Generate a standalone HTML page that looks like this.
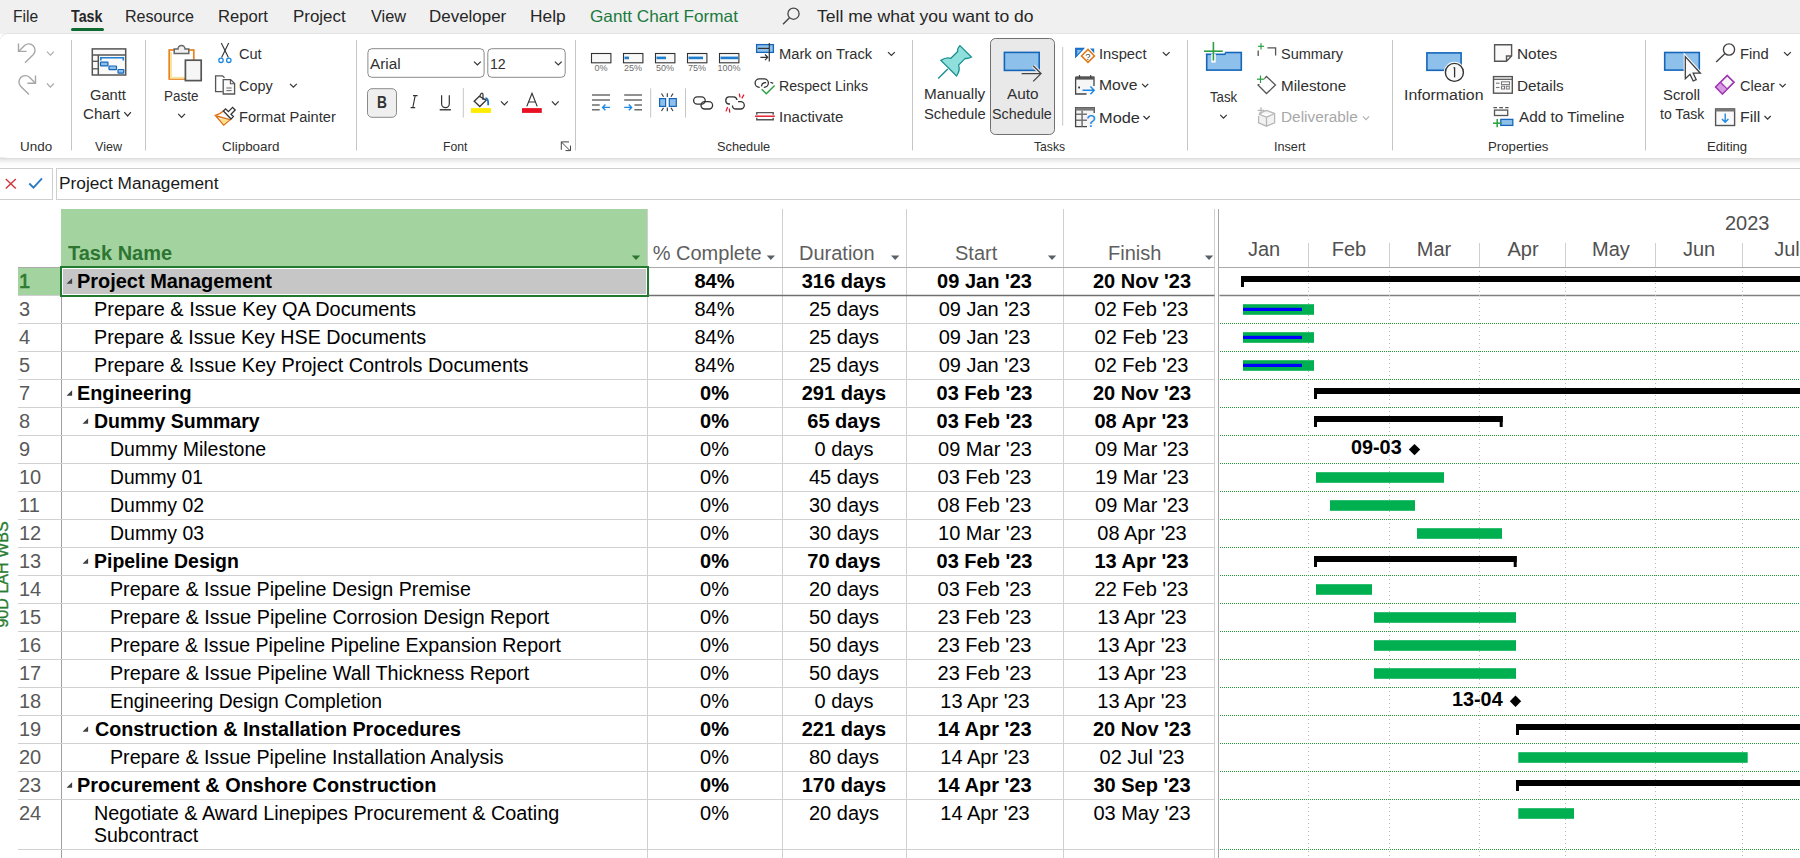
<!DOCTYPE html>
<html><head><meta charset="utf-8"><style>
html,body{margin:0;padding:0;}
body{width:1800px;height:858px;position:relative;overflow:hidden;background:#fff;font-family:"Liberation Sans", sans-serif;}
.t{position:absolute;white-space:pre;transform-origin:0 0;}
#menubar{position:absolute;left:0;top:0;width:1800px;height:34px;background:#f0f0f0;}
#ribbon{position:absolute;left:0;top:34px;width:1800px;height:124px;background:#fff;border-top-left-radius:8px;border-bottom-left-radius:8px;box-shadow:0 -1px 0 #e4e4e4;}
#gap{position:absolute;left:0;top:157px;width:1800px;height:11px;background:linear-gradient(#ffffff 0px,#d8d8d8 1px,#e4e4e4 2px,#f0f0f0 4px,#f9f9f9 6px,#fdfdfd 8px,#ffffff 11px);}
#fb1{position:absolute;left:-1px;top:168px;width:52px;height:30px;border:1px solid #cfcfcf;background:#fff;}
#fb2{position:absolute;left:56px;top:168px;width:1760px;height:30px;border:1px solid #cfcfcf;background:#fff;}
#tabline{position:absolute;left:71px;top:28px;width:33px;height:3px;background:#0e6b2f;border-radius:1.5px;}
svg{position:absolute;left:0;top:0;}
</style></head><body>
<div id="menubar"></div><div id="tabline"></div>
<div id="gap"></div>
<div id="ribbon"></div>
<div id="fb1"></div><div id="fb2"></div>
<svg width="1800" height="858" viewBox="0 0 1800 858" shape-rendering="auto">
<line x1="71.5" y1="40" x2="71.5" y2="150.5" stroke="#c6c6c6" stroke-width="1" />
<line x1="145.5" y1="40" x2="145.5" y2="150.5" stroke="#c6c6c6" stroke-width="1" />
<line x1="356.5" y1="40" x2="356.5" y2="150.5" stroke="#c6c6c6" stroke-width="1" />
<line x1="575.5" y1="40" x2="575.5" y2="150.5" stroke="#c6c6c6" stroke-width="1" />
<line x1="912.5" y1="40" x2="912.5" y2="150.5" stroke="#c6c6c6" stroke-width="1" />
<line x1="1187.5" y1="40" x2="1187.5" y2="150.5" stroke="#c6c6c6" stroke-width="1" />
<line x1="1392.5" y1="40" x2="1392.5" y2="150.5" stroke="#c6c6c6" stroke-width="1" />
<line x1="1645.5" y1="40" x2="1645.5" y2="150.5" stroke="#c6c6c6" stroke-width="1" />
<path d="M18.5,43.5 V51.4 H26.6" stroke="#a6a6a6" fill="none" stroke-width="1.4" />
<path d="M18.8,51.2 L24.5,45.5 A6.3,6.3 0 0 1 33.4,54.4 L25,62.8" stroke="#a6a6a6" fill="none" stroke-width="1.4" />
<path d="M47.0,51.7 L50.4,55.3 L53.8,51.7" stroke="#a6a6a6" fill="none" stroke-width="1.1" />
<path d="M35.5,75.5 V83.2 H27.4" stroke="#a6a6a6" fill="none" stroke-width="1.4" />
<path d="M35.2,83 L29.5,77.3 A6.3,6.3 0 0 0 20.6,86.2 L29,94.6" stroke="#a6a6a6" fill="none" stroke-width="1.4" />
<path d="M47.0,83.5 L50.4,87.1 L53.8,83.5" stroke="#a6a6a6" fill="none" stroke-width="1.1" />
<rect x="92.3" y="48.9" width="33.4" height="26.1" fill="#fafafa" stroke="#555" stroke-width="1.5" rx="0" />
<line x1="92.3" y1="55" x2="125.7" y2="55" stroke="#555" stroke-width="1.5" />
<line x1="98.3" y1="55" x2="98.3" y2="75" stroke="#555" stroke-width="1.5" />
<line x1="92.3" y1="61.3" x2="98.3" y2="61.3" stroke="#555" stroke-width="1.3" />
<line x1="92.3" y1="68.8" x2="98.3" y2="68.8" stroke="#555" stroke-width="1.3" />
<path d="M100.8,60.6 V57.8 H123.3 V60.6" stroke="#1f7fd0" fill="none" stroke-width="1.6" />
<rect x="100.5" y="62.2" width="7.5" height="3.6" fill="#8ec0ec" stroke="#1565b8" stroke-width="1.2" rx="0.6" />
<rect x="109" y="66" width="7.5" height="3.6" fill="#8ec0ec" stroke="#1565b8" stroke-width="1.2" rx="0.6" />
<rect x="118" y="69.5" width="5.799999999999997" height="3.6" fill="#8ec0ec" stroke="#1565b8" stroke-width="1.2" rx="0.6" />
<rect x="169.2" y="50" width="24.6" height="29" fill="#fff" stroke="#e8821e" stroke-width="1.7" rx="0" />
<path d="M171,52 V77.8 H184" stroke="#fbe3a0" fill="none" stroke-width="2" />
<rect x="185.4" y="60.2" width="15.8" height="20.4" fill="#f6f6f6" stroke="#555" stroke-width="1.7" rx="0" />
<path d="M174.2,53.6 V49 H178 A3.5,3.5 0 0 1 185,49 H188.8 V53.6 Z" stroke="#666" fill="#f0f0f0" stroke-width="1.5" />
<path d="M178.2,113.89999999999999 L181.6,117.3 L185.0,113.89999999999999" stroke="#333" fill="none" stroke-width="1.2" />
<line x1="221.3" y1="43.1" x2="228.4" y2="57.5" stroke="#333" stroke-width="1.1" />
<line x1="228.7" y1="43.1" x2="221.6" y2="57.5" stroke="#333" stroke-width="1.1" />
<circle cx="221" cy="60.3" r="2.2" fill="#fff" stroke="#1e88e5" stroke-width="1.3"/>
<circle cx="228.8" cy="60.3" r="2.2" fill="#fff" stroke="#1e88e5" stroke-width="1.3"/>
<path d="M222.6,91.6 H215.6 V75.8 H222.5 L224.5,77.8" stroke="#555" fill="none" stroke-width="1.3" />
<path d="M223.2,94 V79.6 H230.6 L234.6,83.6 V94 Z" stroke="#555" fill="#fafafa" stroke-width="1.3" />
<path d="M230.4,79.6 V83.8 H234.6" stroke="#555" fill="none" stroke-width="1.1" />
<line x1="226.4" y1="88" x2="231.6" y2="88" stroke="#666" stroke-width="1" />
<line x1="226.4" y1="90.6" x2="231.6" y2="90.6" stroke="#666" stroke-width="1" />
<path d="M290.0,83.8 L293.4,87.2 L296.79999999999995,83.8" stroke="#333" fill="none" stroke-width="1.2" />
<path d="M223.4,111 Q219.5,114.5 215.4,115.5 L223.7,125 L231,119" stroke="#e07010" fill="#fdfdfd" stroke-width="1.4" />
<path d="M219.8,118.4 L229.2,120 L223.7,124.2 Z" stroke="none" fill="#fbe08a" stroke-width="1" />
<line x1="216.5" y1="116" x2="229.8" y2="119.6" stroke="#e07010" stroke-width="1.3" />
<path d="M223.4,111 L225.6,108.8 L228.4,111.6 L232.6,107.4 L235.2,110 L231,114.2 L233.4,116.6 L231,119 Z" stroke="#333" fill="#fff" stroke-width="1.3" />
<rect x="367.9" y="48.7" width="116.2" height="28.6" fill="#fff" stroke="#8a8a8a" stroke-width="1" rx="4" />
<rect x="487.8" y="48.7" width="77.4" height="28.6" fill="#fff" stroke="#8a8a8a" stroke-width="1" rx="4" />
<path d="M474.0,61.599999999999994 L477.4,65.0 L480.79999999999995,61.599999999999994" stroke="#333" fill="none" stroke-width="1.2" />
<path d="M554.9,61.599999999999994 L558.3,65.0 L561.6999999999999,61.599999999999994" stroke="#333" fill="none" stroke-width="1.2" />
<rect x="367.5" y="88.7" width="29" height="28.6" fill="#efefef" stroke="#8a8a8a" stroke-width="1" rx="4.5" />
<line x1="463.3" y1="88" x2="463.3" y2="117.6" stroke="#c6c6c6" stroke-width="1" />
<path d="M474.2,101.3 L479.3,96.2 L486.2,100.2 L479.8,106.5 Z" stroke="#333" fill="#f8f8f8" stroke-width="1.3" />
<path d="M479.6,96.5 L481,93.6 Q482.5,92.4 483,94.5 L483,100" stroke="#333" fill="none" stroke-width="1.2" />
<path d="M485.4,98.2 Q488.6,98.4 488.2,105.2" stroke="#1e6fc0" fill="none" stroke-width="1.8" />
<rect x="471" y="108.1" width="20" height="4.8" fill="#ffec00" stroke="none" stroke-width="1" rx="0" />
<path d="M501.0,101.4 L504.4,105.0 L507.79999999999995,101.4" stroke="#333" fill="none" stroke-width="1.2" />
<path d="M526.8,106.4 L532,93.4 L537.2,106.4 M528.8,102 H535.4" stroke="#333" fill="none" stroke-width="1.2" />
<rect x="522" y="108.1" width="19.8" height="4.8" fill="#e81123" stroke="none" stroke-width="1" rx="0" />
<path d="M551.9,101.4 L555.3,105.0 L558.6999999999999,101.4" stroke="#333" fill="none" stroke-width="1.2" />
<path d="M410.6,107.6 H415.2 M413,95.6 H417.6 M415.2,95.6 L412.8,107.6" stroke="#333" fill="none" stroke-width="1.1" />
<path d="M441.6,95.3 V103.8 A3.8,3.8 0 0 0 449.3,103.8 V95.3" stroke="#333" fill="none" stroke-width="1.2" />
<rect x="439.7" y="109" width="11.2" height="1.5" fill="#444" stroke="none" stroke-width="1" rx="0" />
<path d="M561.3,149.8 V141.9 H569 M561.3,141.9 L570,150.6 M565.5,150.6 H570.5 V145.6" stroke="#444" fill="none" stroke-width="1" />
<rect x="591.5" y="53.5" width="19.4" height="9.3" fill="#f8f8f8" stroke="#333" stroke-width="1.1" rx="0" />
<rect x="623.5" y="53.5" width="19.4" height="9.3" fill="#f8f8f8" stroke="#333" stroke-width="1.1" rx="0" />
<rect x="624.5" y="56.6" width="4.5" height="2.6" fill="#1e7fd0" stroke="none" stroke-width="1" rx="0" />
<rect x="655.5" y="53.5" width="19.4" height="9.3" fill="#f8f8f8" stroke="#333" stroke-width="1.1" rx="0" />
<rect x="656.5" y="56.6" width="9.5" height="2.6" fill="#1e7fd0" stroke="none" stroke-width="1" rx="0" />
<rect x="687.5" y="53.5" width="19.4" height="9.3" fill="#f8f8f8" stroke="#333" stroke-width="1.1" rx="0" />
<rect x="688.5" y="56.6" width="14.5" height="2.6" fill="#1e7fd0" stroke="none" stroke-width="1" rx="0" />
<rect x="719.5" y="53.5" width="19.4" height="9.3" fill="#f8f8f8" stroke="#333" stroke-width="1.1" rx="0" />
<rect x="720.5" y="56.6" width="17.6" height="2.6" fill="#1e7fd0" stroke="none" stroke-width="1" rx="0" />
<line x1="592" y1="95" x2="610" y2="95" stroke="#555" stroke-width="1.3" />
<line x1="624.2" y1="95" x2="642" y2="95" stroke="#555" stroke-width="1.3" />
<line x1="592" y1="100" x2="610" y2="100" stroke="#555" stroke-width="1.3" />
<line x1="624.2" y1="100" x2="642" y2="100" stroke="#555" stroke-width="1.3" />
<line x1="592" y1="105" x2="599.7" y2="105" stroke="#555" stroke-width="1.3" />
<line x1="592" y1="109.8" x2="599.7" y2="109.8" stroke="#555" stroke-width="1.3" />
<line x1="634.4" y1="105" x2="642" y2="105" stroke="#555" stroke-width="1.3" />
<line x1="634.4" y1="109.8" x2="642" y2="109.8" stroke="#555" stroke-width="1.3" />
<path d="M610,107.4 H602.6 M605.4,104.6 L602.6,107.4 L605.4,110.2" stroke="#1e88e5" fill="none" stroke-width="1.4" />
<path d="M624.2,107.4 H631.6 M628.8,104.6 L631.6,107.4 L628.8,110.2" stroke="#1e88e5" fill="none" stroke-width="1.4" />
<line x1="650.7" y1="88.3" x2="650.7" y2="117.6" stroke="#c6c6c6" stroke-width="1" />
<rect x="659.6" y="98.6" width="6" height="7.8" fill="#8ec0ec" stroke="#1565b8" stroke-width="1.2" rx="0" />
<rect x="669.3" y="98.6" width="7" height="7.8" fill="#8ec0ec" stroke="#1565b8" stroke-width="1.2" rx="0" />
<line x1="667.3" y1="93.3" x2="667.3" y2="97" stroke="#333" stroke-width="1.1" />
<line x1="667.3" y1="107.5" x2="667.3" y2="111.2" stroke="#333" stroke-width="1.1" />
<line x1="661.5" y1="93.5" x2="663.5" y2="96.8" stroke="#333" stroke-width="1.1" />
<line x1="673" y1="93.5" x2="671" y2="96.8" stroke="#333" stroke-width="1.1" />
<line x1="661.5" y1="111" x2="663.5" y2="107.7" stroke="#333" stroke-width="1.1" />
<line x1="673" y1="111" x2="671" y2="107.7" stroke="#333" stroke-width="1.1" />
<line x1="685.5" y1="88.3" x2="685.5" y2="117.6" stroke="#c6c6c6" stroke-width="1" />
<rect x="693.6" y="96.8" width="11.6" height="7.4" rx="3.7" fill="none" stroke="#333" stroke-width="1.3"/>
<rect x="701" y="101.6" width="11.6" height="7.4" rx="3.7" fill="none" stroke="#333" stroke-width="1.3"/>
<path d="M730,104 H728.6 A3.7,3.7 0 0 1 728.6,96.8 H733.5 A3.7,3.7 0 0 1 737,100" stroke="#333" fill="none" stroke-width="1.3" />
<path d="M738,101.6 H740.6 A3.7,3.7 0 0 1 740.6,109 H736 A3.7,3.7 0 0 1 732.4,105.4" stroke="#333" fill="none" stroke-width="1.3" />
<line x1="739.3" y1="93.6" x2="740" y2="97.3" stroke="#e81123" stroke-width="1.2" />
<line x1="744" y1="94.6" x2="741.8" y2="98.4" stroke="#e81123" stroke-width="1.2" />
<line x1="726" y1="111.4" x2="727.6" y2="107" stroke="#e81123" stroke-width="1.2" />
<line x1="729.8" y1="112.6" x2="729.3" y2="108.6" stroke="#e81123" stroke-width="1.2" />
<rect x="756.6" y="44.6" width="16.8" height="7.8" fill="#8ec0ec" stroke="#1565b8" stroke-width="1.3" rx="0" />
<line x1="757.8" y1="48.4" x2="769" y2="48.4" stroke="#333" stroke-width="1.2" />
<line x1="769.3" y1="43" x2="769.3" y2="61.6" stroke="#333" stroke-width="1.2" />
<path d="M760.4,57.3 H768 M765,54.5 L767.8,57.3 L765,60.1" stroke="#333" fill="none" stroke-width="1.2" />
<path d="M888.0,52.099999999999994 L891.4,55.5 L894.8,52.099999999999994" stroke="#333" fill="none" stroke-width="1.2" />
<path d="M759.7,87.3 H759.3 A4.2,4.2 0 0 1 759.3,78.9 H764.2 A4.2,4.2 0 0 1 764.2,87.3 H763.8" stroke="#333" fill="none" stroke-width="1.3" />
<path d="M761.4,86.3 A4.5,4.5 0 0 1 766.2,82.6" stroke="#333" fill="none" stroke-width="1.3" />
<path d="M770.4,82.2 L773.2,83.4" stroke="#333" fill="none" stroke-width="1.2" />
<path d="M761.7,89.2 L766.3,93.8 L774.6,85.5" stroke="#2aa040" fill="none" stroke-width="1.5" />
<path d="M756.8,114.8 V112.6 H773.2 V114.8 M756.8,117.8 V119.8 H773.2 V117.8" stroke="#555" fill="none" stroke-width="1.4" />
<line x1="755" y1="116.2" x2="774.8" y2="116.2" stroke="#e81123" stroke-width="1.4" />
<line x1="947.8" y1="69" x2="938.2" y2="78.6" stroke="#1a8f8f" stroke-width="1.4" />
<path d="M959.9,45.6 L971.5,57 Q967.8,58.9 965.2,58.4 L958.6,65.1 Q960.4,70.2 956.6,76 L940.9,60.4 Q945.8,56.9 950.9,58.3 L957.7,51.5 Q957,48.6 959.9,45.6 Z" stroke="#1a8f8f" fill="#8fe0dc" stroke-width="1.3" />
<rect x="990.5" y="38.5" width="64" height="96" fill="#e9e9e9" stroke="#707070" stroke-width="1" rx="5" />
<rect x="1004.4" y="52.4" width="34.8" height="18" fill="#8ec0ec" stroke="#1565b8" stroke-width="1.6" rx="0" />
<path d="M1021.6,73.6 H1041 M1033.2,65.8 L1041,73.6 L1033.2,81.4" stroke="#e9e9e9" fill="none" stroke-width="3.6" />
<path d="M1021.6,73.6 H1041 M1033.2,65.8 L1041,73.6 L1033.2,81.4" stroke="#444" fill="none" stroke-width="1.3" />
<line x1="1062.7" y1="47" x2="1062.7" y2="125.6" stroke="#c6c6c6" stroke-width="1" />
<path d="M1075.7,48.4 H1083.6 L1075.7,56.9 Z" stroke="#1565b8" fill="#8ec0ec" stroke-width="1.2" />
<path d="M1075.7,48.4 H1083.6 L1075.7,56.9 Z" stroke="none" fill="#1f78d1" stroke-width="1" />
<path d="M1079,50 H1081.5 L1077.3,54.4 V50 Z" stroke="none" fill="#8ec0ec" stroke-width="1" />
<path d="M1090,48.4 H1094.2 V53.3 Z" stroke="none" fill="#1f78d1" stroke-width="1" />
<path d="M1088,49.4 L1094.5,55.9 L1088,62.4 L1081.5,55.9 Z" stroke="#e07a18" fill="#fff" stroke-width="1.5" />
<text x="1088" y="59.6" font-family="Liberation Sans" font-size="9.5" text-anchor="middle" fill="#444">?</text>
<path d="M1162.8,52.099999999999994 L1166.2,55.5 L1169.6000000000001,52.099999999999994" stroke="#333" fill="none" stroke-width="1.2" />
<rect x="1075.6" y="77" width="18.4" height="17" fill="#f6f6f6" stroke="none" stroke-width="1" rx="0" />
<path d="M1075.6,77.2 H1094 V86 M1075.6,77.2 V94 H1086.5" stroke="#444" fill="none" stroke-width="1.3" />
<rect x="1075.6" y="76.6" width="18.4" height="3" fill="#555" stroke="none" stroke-width="1" rx="0" />
<line x1="1079.5" y1="75" x2="1079.5" y2="78" stroke="#444" stroke-width="1.2" />
<line x1="1090.7" y1="75" x2="1090.7" y2="78" stroke="#444" stroke-width="1.2" />
<rect x="1078.2" y="86.6" width="1.8" height="1.8" fill="#333" stroke="none" stroke-width="1" rx="0" />
<path d="M1082.5,90.3 H1094.2 M1090.4,86.4 L1094.2,90.3 L1090.4,94.2" stroke="#1e88e5" fill="none" stroke-width="1.4" />
<path d="M1142.1000000000001,83.80000000000001 L1145.2,87.0 L1148.3,83.80000000000001" stroke="#333" fill="none" stroke-width="1.2" />
<rect x="1075.6" y="107.6" width="18.6" height="19" fill="#f4f4f4" stroke="none" stroke-width="1" rx="0" />
<path d="M1094.2,113 V107.6 H1075.6 V126.6 H1087" stroke="#444" fill="none" stroke-width="1.3" />
<rect x="1075.6" y="107.4" width="18.6" height="3.2" fill="#7a7a7a" stroke="none" stroke-width="1" rx="0" />
<line x1="1075.6" y1="114.2" x2="1087" y2="114.2" stroke="#555" stroke-width="1.2" />
<line x1="1075.6" y1="120.2" x2="1087" y2="120.2" stroke="#555" stroke-width="1.2" />
<line x1="1082.1" y1="110.5" x2="1082.1" y2="126.6" stroke="#777" stroke-width="1.6" />
<text x="1091" y="126.8" font-family="Liberation Sans" font-size="17" text-anchor="middle" fill="#1e88e5">?</text>
<path d="M1143.5,116.0 L1146.6,119.19999999999999 L1149.6999999999998,116.0" stroke="#333" fill="none" stroke-width="1.2" />
<rect x="1206.7" y="52.5" width="34.6" height="17.6" fill="#8ec0ec" stroke="#1565b8" stroke-width="1.6" rx="0" />
<rect x="1205.5" y="51.2" width="19.8" height="2.4" fill="#fff" stroke="none" stroke-width="1" rx="0" />
<line x1="1205.9" y1="54.4" x2="1225.3" y2="54.4" stroke="#1565b8" stroke-width="1.4" />
<line x1="1225.3" y1="52.5" x2="1225.3" y2="54.4" stroke="#1565b8" stroke-width="1.4" />
<rect x="1211.3" y="53.8" width="4.4" height="8.8" fill="#fff" stroke="none" stroke-width="1" rx="0" />
<line x1="1213.4" y1="42" x2="1213.4" y2="60.6" stroke="#2aa040" stroke-width="1.6" />
<line x1="1204" y1="51.2" x2="1222.8" y2="51.2" stroke="#2aa040" stroke-width="1.6" />
<path d="M1220.25,114.8 L1223.5,118.2 L1226.75,114.8" stroke="#333" fill="none" stroke-width="1.2" />
<line x1="1261" y1="43.3" x2="1261" y2="49.5" stroke="#2aa040" stroke-width="1.2" />
<line x1="1258" y1="46.3" x2="1264" y2="46.3" stroke="#2aa040" stroke-width="1.2" />
<path d="M1258.2,56 V50.6 M1267.4,47.8 H1275.6 V55.6" stroke="#555" fill="none" stroke-width="1.3" />
<path d="M1266.5,76.5 L1275.5,85 L1266.5,93.5 L1258,85 Z" stroke="#555" fill="#fff" stroke-width="1.3" />
<rect x="1256.8" y="77" width="7.5" height="7" fill="#fff" stroke="none" stroke-width="1" rx="0" />
<line x1="1260.5" y1="75.5" x2="1260.5" y2="83" stroke="#2aa040" stroke-width="1.2" />
<line x1="1257" y1="79.2" x2="1264" y2="79.2" stroke="#2aa040" stroke-width="1.2" />
<path d="M1259,113.3 L1266.5,110.5 L1274.6,113.5 V122.8 L1266.5,126.2 L1258.6,122.8 V116 M1258.6,114 L1266.5,117.2 L1274.6,113.5 M1266.5,117.2 V126" stroke="#b8b8b8" fill="#f2f2f2" stroke-width="1.3" />
<line x1="1261" y1="107.2" x2="1261" y2="114" stroke="#b8b8b8" stroke-width="1.3" />
<line x1="1257.6" y1="110.4" x2="1264.6" y2="110.4" stroke="#b8b8b8" stroke-width="1.3" />
<path d="M1362.9,116.4 L1366,119.6 L1369.1,116.4" stroke="#b0b0b0" fill="none" stroke-width="1.1" />
<rect x="1426.9" y="52.9" width="34.2" height="17.4" fill="#8ec0ec" stroke="#1565b8" stroke-width="1.6" rx="0" />
<circle cx="1454.4" cy="72.4" r="10.6" fill="#fff"/>
<circle cx="1454.4" cy="72.4" r="9" fill="#fafafa" stroke="#333" stroke-width="1.4"/>
<line x1="1454.6" y1="67.4" x2="1454.6" y2="77.4" stroke="#333" stroke-width="1.3" />
<line x1="1453.4" y1="67.8" x2="1454.8" y2="67.8" stroke="#333" stroke-width="1" />
<path d="M1494.6,61.3 V44.8 H1511.6 V56 L1506.5,61.3 Z M1506.5,61.3 V56 H1511.6" stroke="#555" fill="#fafafa" stroke-width="1.4" />
<rect x="1493.5" y="76.6" width="18.8" height="16.6" fill="#fafafa" stroke="#555" stroke-width="1.4" rx="0" />
<line x1="1493.5" y1="79.3" x2="1512.3" y2="79.3" stroke="#555" stroke-width="1.2" />
<line x1="1496" y1="83.2" x2="1499.5" y2="83.2" stroke="#777" stroke-width="1.1" />
<line x1="1496" y1="87.5" x2="1499.5" y2="87.5" stroke="#777" stroke-width="1.1" />
<rect x="1501.5" y="81.8" width="8" height="2.8" fill="none" stroke="#777" stroke-width="1" rx="0" />
<rect x="1501.5" y="86.2" width="3" height="2.8" fill="none" stroke="#777" stroke-width="1" rx="0" />
<rect x="1506.3" y="86.2" width="3" height="2.8" fill="none" stroke="#777" stroke-width="1" rx="0" />
<path d="M1493.4,107.7 H1497 M1499.2,107.7 H1503 M1505.2,107.7 H1508.6" stroke="#555" fill="none" stroke-width="1.3" />
<rect x="1494.5" y="110.1" width="13.2" height="5.4" fill="#fafafa" stroke="#555" stroke-width="1.3" rx="0" />
<rect x="1500.8" y="119.4" width="12" height="6" fill="#8ec0ec" stroke="#1565b8" stroke-width="1.3" rx="0" />
<line x1="1497.2" y1="119" x2="1497.2" y2="127.2" stroke="#2aa040" stroke-width="1.5" />
<line x1="1493" y1="123.2" x2="1501.4" y2="123.2" stroke="#2aa040" stroke-width="1.5" />
<rect x="1664.7" y="52.5" width="34.6" height="17.6" fill="#8ec0ec" stroke="#1565b8" stroke-width="1.6" rx="0" />
<path d="M1685.3,56.6 V78.8 L1690,74.4 L1693.2,81 L1696.2,79.6 L1693.2,73.2 L1700.4,73.2 Z" stroke="#fff" fill="#fff" stroke-width="3.2" />
<path d="M1685.3,56.6 V78.8 L1690,74.4 L1693.2,81 L1696.2,79.6 L1693.2,73.2 L1700.4,73.2 Z" stroke="#404040" fill="#fafafa" stroke-width="1.3" />
<circle cx="1729" cy="49.5" r="5.6" fill="none" stroke="#444" stroke-width="1.4"/>
<line x1="1725" y1="53.5" x2="1716.2" y2="62" stroke="#444" stroke-width="1.4" />
<path d="M1784.0,52.099999999999994 L1787.4,55.5 L1790.8000000000002,52.099999999999994" stroke="#333" fill="none" stroke-width="1.2" />
<path d="M1715.6,87.1 L1727.2,75.4 L1734,82.2 L1722.4,94 Z" stroke="#a23bb5" fill="#f6f6f6" stroke-width="1.4" />
<path d="M1715.6,87.1 L1720.6,82 L1725.6,89.2 L1722.4,94 Z" stroke="none" fill="#d79ae3" stroke-width="1" />
<path d="M1715.6,87.1 L1727.2,75.4 L1734,82.2 L1722.4,94 Z M1720.4,82.3 L1727,89" stroke="#a23bb5" fill="none" stroke-width="1.4" />
<path d="M1779.5,83.80000000000001 L1782.6,87.0 L1785.6999999999998,83.80000000000001" stroke="#333" fill="none" stroke-width="1.2" />
<rect x="1715.6" y="108.9" width="19" height="16.6" fill="#fafafa" stroke="#555" stroke-width="1.4" rx="0" />
<rect x="1715.6" y="108.9" width="19" height="2.6" fill="#777" stroke="none" stroke-width="1" rx="0" />
<path d="M1725.2,113.5 V122 M1722,119 L1725.2,122.2 L1728.4,119" stroke="#1e88e5" fill="none" stroke-width="1.4" />
<path d="M1764.5,116.0 L1767.6,119.19999999999999 L1770.6999999999998,116.0" stroke="#333" fill="none" stroke-width="1.2" />
<path d="M124.3,112.19999999999999 L127.6,116.0 L130.9,112.19999999999999" stroke="#333" fill="none" stroke-width="1.2" />
<circle cx="793.5" cy="13.7" r="5.6" fill="none" stroke="#444" stroke-width="1.3"/>
<line x1="789.5" y1="17.8" x2="783" y2="24.3" stroke="#444" stroke-width="1.4" />
<text transform="translate(7.8,627.6) rotate(-90)" font-family="Liberation Sans" font-size="16.1" fill="#2a7d30" stroke="#2a7d30" stroke-width="0.35">90D LAH WBS</text>
<line x1="5.8" y1="179" x2="15.8" y2="188.6" stroke="#d13438" stroke-width="1.4" />
<line x1="15.8" y1="179" x2="5.8" y2="188.6" stroke="#d13438" stroke-width="1.4" />
<path d="M29.3,183.5 L33.5,187.6 L42,178.4" stroke="#2b78c2" fill="none" stroke-width="1.8" />
<rect x="61" y="209" width="586.5" height="58" fill="#a3d4a0" stroke="none" stroke-width="1" rx="0" />
<line x1="647.5" y1="209" x2="647.5" y2="858" stroke="#d0d0d0" stroke-width="1" />
<line x1="782.5" y1="209" x2="782.5" y2="858" stroke="#d0d0d0" stroke-width="1" />
<line x1="906.5" y1="209" x2="906.5" y2="858" stroke="#d0d0d0" stroke-width="1" />
<line x1="1063.5" y1="209" x2="1063.5" y2="858" stroke="#d0d0d0" stroke-width="1" />
<line x1="1214.5" y1="209" x2="1214.5" y2="858" stroke="#d0d0d0" stroke-width="1" />
<line x1="61.5" y1="267" x2="61.5" y2="858" stroke="#a0a0a0" stroke-width="1" />
<line x1="1218.5" y1="209" x2="1218.5" y2="858" stroke="#a6a6a6" stroke-width="1" />
<line x1="18" y1="267.5" x2="1214.5" y2="267.5" stroke="#d0d0d0" stroke-width="1" />
<line x1="18" y1="295.5" x2="1214.5" y2="295.5" stroke="#d0d0d0" stroke-width="1" />
<line x1="18" y1="323.5" x2="1214.5" y2="323.5" stroke="#d0d0d0" stroke-width="1" />
<line x1="18" y1="351.5" x2="1214.5" y2="351.5" stroke="#d0d0d0" stroke-width="1" />
<line x1="18" y1="379.5" x2="1214.5" y2="379.5" stroke="#d0d0d0" stroke-width="1" />
<line x1="18" y1="407.5" x2="1214.5" y2="407.5" stroke="#d0d0d0" stroke-width="1" />
<line x1="18" y1="435.5" x2="1214.5" y2="435.5" stroke="#d0d0d0" stroke-width="1" />
<line x1="18" y1="463.5" x2="1214.5" y2="463.5" stroke="#d0d0d0" stroke-width="1" />
<line x1="18" y1="491.5" x2="1214.5" y2="491.5" stroke="#d0d0d0" stroke-width="1" />
<line x1="18" y1="519.5" x2="1214.5" y2="519.5" stroke="#d0d0d0" stroke-width="1" />
<line x1="18" y1="547.5" x2="1214.5" y2="547.5" stroke="#d0d0d0" stroke-width="1" />
<line x1="18" y1="575.5" x2="1214.5" y2="575.5" stroke="#d0d0d0" stroke-width="1" />
<line x1="18" y1="603.5" x2="1214.5" y2="603.5" stroke="#d0d0d0" stroke-width="1" />
<line x1="18" y1="631.5" x2="1214.5" y2="631.5" stroke="#d0d0d0" stroke-width="1" />
<line x1="18" y1="659.5" x2="1214.5" y2="659.5" stroke="#d0d0d0" stroke-width="1" />
<line x1="18" y1="687.5" x2="1214.5" y2="687.5" stroke="#d0d0d0" stroke-width="1" />
<line x1="18" y1="715.5" x2="1214.5" y2="715.5" stroke="#d0d0d0" stroke-width="1" />
<line x1="18" y1="743.5" x2="1214.5" y2="743.5" stroke="#d0d0d0" stroke-width="1" />
<line x1="18" y1="771.5" x2="1214.5" y2="771.5" stroke="#d0d0d0" stroke-width="1" />
<line x1="18" y1="799.5" x2="1214.5" y2="799.5" stroke="#d0d0d0" stroke-width="1" />
<line x1="18" y1="849.5" x2="1214.5" y2="849.5" stroke="#d0d0d0" stroke-width="1" />
<line x1="18" y1="267.5" x2="1214.5" y2="267.5" stroke="#aaaaaa" stroke-width="1" />
<line x1="1219" y1="267.5" x2="1800" y2="267.5" stroke="#aaaaaa" stroke-width="1" />
<rect x="18" y="268" width="43" height="27" fill="#a3d4a0" stroke="none" stroke-width="1" rx="0" />
<rect x="62" y="268" width="585" height="27" fill="#ffffff" stroke="none" stroke-width="1" rx="0" />
<rect x="63" y="269" width="583" height="25" fill="#c6c6c6" stroke="none" stroke-width="1" rx="0" />
<rect x="61" y="267" width="587" height="29" fill="none" stroke="#217a2e" stroke-width="2" rx="0" />
<line x1="648.5" y1="295.5" x2="1214.5" y2="295.5" stroke="#707070" stroke-width="1.4" />
<line x1="1219.5" y1="295.5" x2="1800" y2="295.5" stroke="#808080" stroke-width="1.4" />
<path d="M631.8,255.4 H640.2 L636.0,260 Z" stroke="none" fill="#2e7532" stroke-width="1" />
<path d="M766.7,255.4 H775 L770.85,260 Z" stroke="none" fill="#596068" stroke-width="1" />
<path d="M891,255.4 H899.4 L895.2,260 Z" stroke="none" fill="#596068" stroke-width="1" />
<path d="M1047.9,255.4 H1056.2 L1052.0500000000002,260 Z" stroke="none" fill="#596068" stroke-width="1" />
<path d="M1204.9,255.4 H1213.2 L1209.0500000000002,260 Z" stroke="none" fill="#596068" stroke-width="1" />
<path d="M72.1,278.2 V283.8 H66.5 Z" stroke="none" fill="#404040" stroke-width="1" />
<path d="M72.1,390.2 V395.8 H66.5 Z" stroke="none" fill="#404040" stroke-width="1" />
<path d="M88.1,418.2 V423.8 H82.5 Z" stroke="none" fill="#404040" stroke-width="1" />
<path d="M88.1,558.2 V563.8 H82.5 Z" stroke="none" fill="#404040" stroke-width="1" />
<path d="M88.1,726.2 V731.8 H82.5 Z" stroke="none" fill="#404040" stroke-width="1" />
<path d="M72.1,782.2 V787.8 H66.5 Z" stroke="none" fill="#404040" stroke-width="1" />
<line x1="1308.5" y1="243" x2="1308.5" y2="267" stroke="#d0d0d0" stroke-width="1" />
<line x1="1308.5" y1="271" x2="1308.5" y2="858" stroke="#b8b8b8" stroke-width="1" stroke-dasharray="1,3"/>
<line x1="1389.5" y1="243" x2="1389.5" y2="267" stroke="#d0d0d0" stroke-width="1" />
<line x1="1389.5" y1="271" x2="1389.5" y2="858" stroke="#b8b8b8" stroke-width="1" stroke-dasharray="1,3"/>
<line x1="1479.5" y1="243" x2="1479.5" y2="267" stroke="#d0d0d0" stroke-width="1" />
<line x1="1479.5" y1="271" x2="1479.5" y2="858" stroke="#b8b8b8" stroke-width="1" stroke-dasharray="1,3"/>
<line x1="1565.5" y1="243" x2="1565.5" y2="267" stroke="#d0d0d0" stroke-width="1" />
<line x1="1565.5" y1="271" x2="1565.5" y2="858" stroke="#b8b8b8" stroke-width="1" stroke-dasharray="1,3"/>
<line x1="1655.5" y1="243" x2="1655.5" y2="267" stroke="#d0d0d0" stroke-width="1" />
<line x1="1655.5" y1="271" x2="1655.5" y2="858" stroke="#b8b8b8" stroke-width="1" stroke-dasharray="1,3"/>
<line x1="1742.5" y1="243" x2="1742.5" y2="267" stroke="#d0d0d0" stroke-width="1" />
<line x1="1742.5" y1="271" x2="1742.5" y2="858" stroke="#b8b8b8" stroke-width="1" stroke-dasharray="1,3"/>
<line x1="1220" y1="323.5" x2="1800" y2="323.5" stroke="#1f9a3a" stroke-width="1" stroke-dasharray="1,1"/>
<line x1="1220" y1="351.5" x2="1800" y2="351.5" stroke="#1f9a3a" stroke-width="1" stroke-dasharray="1,1"/>
<line x1="1220" y1="379.5" x2="1800" y2="379.5" stroke="#1f9a3a" stroke-width="1" stroke-dasharray="1,1"/>
<line x1="1220" y1="407.5" x2="1800" y2="407.5" stroke="#1f9a3a" stroke-width="1" stroke-dasharray="1,1"/>
<line x1="1220" y1="435.5" x2="1800" y2="435.5" stroke="#1f9a3a" stroke-width="1" stroke-dasharray="1,1"/>
<line x1="1220" y1="463.5" x2="1800" y2="463.5" stroke="#1f9a3a" stroke-width="1" stroke-dasharray="1,1"/>
<line x1="1220" y1="491.5" x2="1800" y2="491.5" stroke="#1f9a3a" stroke-width="1" stroke-dasharray="1,1"/>
<line x1="1220" y1="519.5" x2="1800" y2="519.5" stroke="#1f9a3a" stroke-width="1" stroke-dasharray="1,1"/>
<line x1="1220" y1="547.5" x2="1800" y2="547.5" stroke="#1f9a3a" stroke-width="1" stroke-dasharray="1,1"/>
<line x1="1220" y1="575.5" x2="1800" y2="575.5" stroke="#1f9a3a" stroke-width="1" stroke-dasharray="1,1"/>
<line x1="1220" y1="603.5" x2="1800" y2="603.5" stroke="#1f9a3a" stroke-width="1" stroke-dasharray="1,1"/>
<line x1="1220" y1="631.5" x2="1800" y2="631.5" stroke="#1f9a3a" stroke-width="1" stroke-dasharray="1,1"/>
<line x1="1220" y1="659.5" x2="1800" y2="659.5" stroke="#1f9a3a" stroke-width="1" stroke-dasharray="1,1"/>
<line x1="1220" y1="687.5" x2="1800" y2="687.5" stroke="#1f9a3a" stroke-width="1" stroke-dasharray="1,1"/>
<line x1="1220" y1="715.5" x2="1800" y2="715.5" stroke="#1f9a3a" stroke-width="1" stroke-dasharray="1,1"/>
<line x1="1220" y1="743.5" x2="1800" y2="743.5" stroke="#1f9a3a" stroke-width="1" stroke-dasharray="1,1"/>
<line x1="1220" y1="771.5" x2="1800" y2="771.5" stroke="#1f9a3a" stroke-width="1" stroke-dasharray="1,1"/>
<line x1="1220" y1="799.5" x2="1800" y2="799.5" stroke="#1f9a3a" stroke-width="1" stroke-dasharray="1,1"/>
<line x1="1220" y1="849.5" x2="1800" y2="849.5" stroke="#1f9a3a" stroke-width="1" stroke-dasharray="1,1"/>
<rect x="1241" y="276" width="559" height="6" fill="#000" stroke="none" stroke-width="1" rx="0" />
<rect x="1241" y="276" width="3" height="11" fill="#000" stroke="none" stroke-width="1" rx="0" />
<rect x="1243" y="304.2" width="71" height="10.6" fill="#00b050" stroke="none" stroke-width="1" rx="0" />
<rect x="1243" y="307.8" width="59" height="3.2" fill="#0000ff" stroke="none" stroke-width="1" rx="0" />
<rect x="1243" y="332.2" width="71" height="10.6" fill="#00b050" stroke="none" stroke-width="1" rx="0" />
<rect x="1243" y="335.8" width="59" height="3.2" fill="#0000ff" stroke="none" stroke-width="1" rx="0" />
<rect x="1243" y="360.2" width="71" height="10.6" fill="#00b050" stroke="none" stroke-width="1" rx="0" />
<rect x="1243" y="363.8" width="59" height="3.2" fill="#0000ff" stroke="none" stroke-width="1" rx="0" />
<rect x="1314" y="388" width="486" height="6" fill="#000" stroke="none" stroke-width="1" rx="0" />
<rect x="1314" y="388" width="3" height="11" fill="#000" stroke="none" stroke-width="1" rx="0" />
<rect x="1314" y="416" width="188.70000000000005" height="6" fill="#000" stroke="none" stroke-width="1" rx="0" />
<rect x="1314" y="416" width="3" height="11" fill="#000" stroke="none" stroke-width="1" rx="0" />
<rect x="1499.7" y="416" width="3" height="11" fill="#000" stroke="none" stroke-width="1" rx="0" />
<path d="M1414.5,443.90000000000003 L1420.2,449.6 L1414.5,455.3 L1408.8,449.6 Z" stroke="none" fill="#000" stroke-width="1" />
<rect x="1316" y="472.2" width="128" height="10.6" fill="#00b050" stroke="none" stroke-width="1" rx="0" />
<rect x="1330" y="500.2" width="85" height="10.6" fill="#00b050" stroke="none" stroke-width="1" rx="0" />
<rect x="1417" y="528.2" width="85" height="10.6" fill="#00b050" stroke="none" stroke-width="1" rx="0" />
<rect x="1314" y="556" width="202.70000000000005" height="6" fill="#000" stroke="none" stroke-width="1" rx="0" />
<rect x="1314" y="556" width="3" height="11" fill="#000" stroke="none" stroke-width="1" rx="0" />
<rect x="1513.7" y="556" width="3" height="11" fill="#000" stroke="none" stroke-width="1" rx="0" />
<rect x="1316" y="584.2" width="56" height="10.6" fill="#00b050" stroke="none" stroke-width="1" rx="0" />
<rect x="1374" y="612.2" width="142" height="10.6" fill="#00b050" stroke="none" stroke-width="1" rx="0" />
<rect x="1374" y="640.2" width="142" height="10.6" fill="#00b050" stroke="none" stroke-width="1" rx="0" />
<rect x="1374" y="668.2" width="142" height="10.6" fill="#00b050" stroke="none" stroke-width="1" rx="0" />
<path d="M1515.5,695.5999999999999 L1521.2,701.3 L1515.5,707.0 L1509.8,701.3 Z" stroke="none" fill="#000" stroke-width="1" />
<rect x="1516" y="724" width="284" height="6" fill="#000" stroke="none" stroke-width="1" rx="0" />
<rect x="1516" y="724" width="3" height="11" fill="#000" stroke="none" stroke-width="1" rx="0" />
<rect x="1518.3" y="752.2" width="229.4000000000001" height="10.6" fill="#00b050" stroke="none" stroke-width="1" rx="0" />
<rect x="1516" y="780" width="284" height="6" fill="#000" stroke="none" stroke-width="1" rx="0" />
<rect x="1516" y="780" width="3" height="11" fill="#000" stroke="none" stroke-width="1" rx="0" />
<rect x="1518.3" y="808.2" width="55.700000000000045" height="10.6" fill="#00b050" stroke="none" stroke-width="1" rx="0" />
</svg>
<span id="t0" class="t" style="top:8.03px;font-size:16.5px;line-height:16.5px;color:#262626;left:13.47px;transform:scaleX(0.9440);">File</span>
<span id="t1" class="t" style="top:8.03px;font-size:16.5px;line-height:16.5px;color:#262626;left:125.43px;transform:scaleX(0.9754);">Resource</span>
<span id="t2" class="t" style="top:8.03px;font-size:16.5px;line-height:16.5px;color:#262626;left:218.39px;transform:scaleX(1.0061);">Report</span>
<span id="t3" class="t" style="top:8.03px;font-size:16.5px;line-height:16.5px;color:#262626;left:293.37px;transform:scaleX(1.0260);">Project</span>
<span id="t4" class="t" style="top:8.03px;font-size:16.5px;line-height:16.5px;color:#262626;left:370.80px;transform:scaleX(0.9889);">View</span>
<span id="t5" class="t" style="top:8.03px;font-size:16.5px;line-height:16.5px;color:#262626;left:429.36px;transform:scaleX(1.0270);">Developer</span>
<span id="t6" class="t" style="top:8.03px;font-size:16.5px;line-height:16.5px;color:#262626;left:530.34px;transform:scaleX(1.0500);">Help</span>
<span id="t7" class="t" style="top:8.03px;font-size:16.5px;line-height:16.5px;color:#262626;font-weight:700;left:71.00px;transform:scaleX(0.8649);">Task</span>
<span id="t8" class="t" style="top:8.03px;font-size:16.5px;line-height:16.5px;color:#1b7a3e;left:589.98px;transform:scaleX(1.0408);">Gantt Chart Format</span>
<span id="t9" class="t" style="top:7.53px;font-size:16.5px;line-height:16.5px;color:#262626;left:816.62px;transform:scaleX(1.0637);">Tell me what you want to do</span>
<span id="t10" class="t" style="top:139.50px;font-size:13px;line-height:13px;color:#303030;left:19.98px;transform:scaleX(1.0333);">Undo</span>
<span id="t11" class="t" style="top:139.50px;font-size:13px;line-height:13px;color:#303030;left:95.00px;transform:scaleX(0.9643);">View</span>
<span id="t12" class="t" style="top:139.50px;font-size:13px;line-height:13px;color:#303030;left:222.19px;transform:scaleX(1.0327);">Clipboard</span>
<span id="t13" class="t" style="top:139.50px;font-size:13px;line-height:13px;color:#303030;left:443.22px;transform:scaleX(0.9385);">Font</span>
<span id="t14" class="t" style="top:139.50px;font-size:13px;line-height:13px;color:#303030;left:717.02px;transform:scaleX(0.9811);">Schedule</span>
<span id="t15" class="t" style="top:139.50px;font-size:13px;line-height:13px;color:#303030;left:1033.84px;transform:scaleX(0.9344);">Tasks</span>
<span id="t16" class="t" style="top:139.50px;font-size:13px;line-height:13px;color:#303030;left:1273.82px;transform:scaleX(0.9719);">Insert</span>
<span id="t17" class="t" style="top:139.50px;font-size:13px;line-height:13px;color:#303030;left:1488.38px;transform:scaleX(1.0190);">Properties</span>
<span id="t18" class="t" style="top:139.50px;font-size:13px;line-height:13px;color:#303030;left:1706.79px;transform:scaleX(1.0103);">Editing</span>
<span id="t19" class="t" style="top:86.75px;font-size:15.3px;line-height:15.3px;color:#303030;left:90.04px;transform:scaleX(0.9595);">Gantt</span>
<span id="t20" class="t" style="top:106.45px;font-size:15.3px;line-height:15.3px;color:#303030;left:83.01px;transform:scaleX(0.9865);">Chart</span>
<span id="t21" class="t" style="top:88.05px;font-size:15.3px;line-height:15.3px;color:#303030;left:164.18px;transform:scaleX(0.8784);">Paste</span>
<span id="t22" class="t" style="top:45.75px;font-size:15.3px;line-height:15.3px;color:#303030;left:239.24px;transform:scaleX(0.9522);">Cut</span>
<span id="t23" class="t" style="top:77.65px;font-size:15.3px;line-height:15.3px;color:#303030;left:239.25px;transform:scaleX(0.9400);">Copy</span>
<span id="t24" class="t" style="top:109.45px;font-size:15.3px;line-height:15.3px;color:#303030;left:239.24px;transform:scaleX(0.9570);">Format Painter</span>
<span id="t25" class="t" style="top:56.05px;font-size:15.3px;line-height:15.3px;color:#303030;left:370.00px;">Arial</span>
<span id="t26" class="t" style="top:56.05px;font-size:15.3px;line-height:15.3px;color:#303030;left:490.07px;transform:scaleX(0.9250);">12</span>
<span id="t27" class="t" style="top:93.51px;font-size:17px;line-height:17px;color:#333;font-weight:700;left:377.19px;transform:scaleX(0.8091);">B</span>
<span id="t28" class="t" style="top:64.18px;font-size:9px;line-height:9px;color:#6e6e6e;left:301.00px;width:600px;text-align:center;transform-origin:50% 0;transform:scaleX(0.9994);">0%</span>
<span id="t29" class="t" style="top:64.18px;font-size:9px;line-height:9px;color:#6e6e6e;left:333.00px;width:600px;text-align:center;transform-origin:50% 0;transform:scaleX(0.9999);">25%</span>
<span id="t30" class="t" style="top:64.18px;font-size:9px;line-height:9px;color:#6e6e6e;left:365.00px;width:600px;text-align:center;transform-origin:50% 0;transform:scaleX(0.9999);">50%</span>
<span id="t31" class="t" style="top:64.18px;font-size:9px;line-height:9px;color:#6e6e6e;left:397.00px;width:600px;text-align:center;transform-origin:50% 0;transform:scaleX(0.9999);">75%</span>
<span id="t32" class="t" style="top:64.18px;font-size:9px;line-height:9px;color:#6e6e6e;left:429.00px;width:600px;text-align:center;transform-origin:50% 0;transform:scaleX(0.9995);">100%</span>
<span id="t33" class="t" style="top:45.55px;font-size:15.3px;line-height:15.3px;color:#303030;left:779.25px;transform:scaleX(0.9621);">Mark on Track</span>
<span id="t34" class="t" style="top:77.65px;font-size:15.3px;line-height:15.3px;color:#303030;left:779.30px;transform:scaleX(0.9266);">Respect Links</span>
<span id="t35" class="t" style="top:109.45px;font-size:15.3px;line-height:15.3px;color:#303030;left:779.22px;transform:scaleX(0.9828);">Inactivate</span>
<span id="t36" class="t" style="top:86.25px;font-size:15.3px;line-height:15.3px;color:#303030;left:924.00px;">Manually</span>
<span id="t37" class="t" style="top:106.45px;font-size:15.3px;line-height:15.3px;color:#303030;left:924.03px;transform:scaleX(0.9677);">Schedule</span>
<span id="t38" class="t" style="top:86.25px;font-size:15.3px;line-height:15.3px;color:#303030;left:1006.80px;transform:scaleX(1.0032);">Auto</span>
<span id="t39" class="t" style="top:106.45px;font-size:15.3px;line-height:15.3px;color:#303030;left:991.84px;transform:scaleX(0.9381);">Schedule</span>
<span id="t40" class="t" style="top:45.85px;font-size:15.3px;line-height:15.3px;color:#303030;left:1099.06px;transform:scaleX(0.9625);">Inspect</span>
<span id="t41" class="t" style="top:77.35px;font-size:15.3px;line-height:15.3px;color:#303030;left:1098.96px;transform:scaleX(1.0278);">Move</span>
<span id="t42" class="t" style="top:109.55px;font-size:15.3px;line-height:15.3px;color:#303030;left:1098.90px;transform:scaleX(1.0694);">Mode</span>
<span id="t43" class="t" style="top:89.45px;font-size:15.3px;line-height:15.3px;color:#303030;left:1210.07px;transform:scaleX(0.8645);">Task</span>
<span id="t44" class="t" style="top:45.55px;font-size:15.3px;line-height:15.3px;color:#303030;left:1281.47px;transform:scaleX(0.9469);">Summary</span>
<span id="t45" class="t" style="top:77.65px;font-size:15.3px;line-height:15.3px;color:#303030;left:1281.41px;transform:scaleX(0.9953);">Milestone</span>
<span id="t46" class="t" style="top:109.45px;font-size:15.3px;line-height:15.3px;color:#a8a8a8;left:1281.39px;transform:scaleX(1.0040);">Deliverable</span>
<span id="t47" class="t" style="top:86.75px;font-size:15.3px;line-height:15.3px;color:#303030;left:1403.94px;transform:scaleX(1.0392);">Information</span>
<span id="t48" class="t" style="top:45.55px;font-size:15.3px;line-height:15.3px;color:#303030;left:1516.99px;transform:scaleX(1.0053);">Notes</span>
<span id="t49" class="t" style="top:77.65px;font-size:15.3px;line-height:15.3px;color:#303030;left:1517.00px;">Details</span>
<span id="t50" class="t" style="top:109.45px;font-size:15.3px;line-height:15.3px;color:#303030;left:1519.00px;">Add to Timeline</span>
<span id="t51" class="t" style="top:86.75px;font-size:15.3px;line-height:15.3px;color:#303030;left:1663.01px;transform:scaleX(0.9703);">Scroll</span>
<span id="t52" class="t" style="top:106.45px;font-size:15.3px;line-height:15.3px;color:#303030;left:1659.77px;transform:scaleX(0.9184);">to Task</span>
<span id="t53" class="t" style="top:45.55px;font-size:15.3px;line-height:15.3px;color:#303030;left:1739.62px;transform:scaleX(0.9643);">Find</span>
<span id="t54" class="t" style="top:77.65px;font-size:15.3px;line-height:15.3px;color:#303030;left:1739.63px;transform:scaleX(0.9500);">Clear</span>
<span id="t55" class="t" style="top:109.45px;font-size:15.3px;line-height:15.3px;color:#303030;left:1739.57px;transform:scaleX(1.0389);">Fill</span>
<span id="t56" class="t" style="top:175.96px;font-size:16px;line-height:16px;color:#1a1a1a;left:59.30px;transform:scaleX(1.0803);">Project Management</span>
<span id="t57" class="t" style="top:270.67px;font-size:20px;line-height:20px;color:#2f7a2f;left:18.50px;transform:scaleX(0.9998);-webkit-text-stroke:0.7px #2f7a2f;">1</span>
<span id="t58" class="t" style="top:270.67px;font-size:20px;line-height:20px;color:#000;font-weight:700;left:77.00px;transform:scaleX(0.9969);">Project Management</span>
<span id="t59" class="t" style="top:270.67px;font-size:20px;line-height:20px;color:#000;font-weight:700;left:414.50px;width:600px;text-align:center;transform-origin:50% 0;transform:scaleX(1.0000);">84%</span>
<span id="t60" class="t" style="top:270.67px;font-size:20px;line-height:20px;color:#000;font-weight:700;left:544.00px;width:600px;text-align:center;transform-origin:50% 0;transform:scaleX(1.0000);">316 days</span>
<span id="t61" class="t" style="top:270.67px;font-size:20px;line-height:20px;color:#000;font-weight:700;left:684.50px;width:600px;text-align:center;transform-origin:50% 0;transform:scaleX(1.0000);">09 Jan '23</span>
<span id="t62" class="t" style="top:270.67px;font-size:20px;line-height:20px;color:#000;font-weight:700;left:841.50px;width:600px;text-align:center;transform-origin:50% 0;transform:scaleX(0.9999);">20 Nov '23</span>
<span id="t63" class="t" style="top:298.67px;font-size:20px;line-height:20px;color:#595959;left:18.50px;transform:scaleX(0.9998);">3</span>
<span id="t64" class="t" style="top:298.67px;font-size:20px;line-height:20px;color:#000;left:93.61px;transform:scaleX(0.9950);">Prepare &amp; Issue Key QA Documents</span>
<span id="t65" class="t" style="top:298.67px;font-size:20px;line-height:20px;color:#000;left:414.50px;width:600px;text-align:center;transform-origin:50% 0;transform:scaleX(1.0000);">84%</span>
<span id="t66" class="t" style="top:298.67px;font-size:20px;line-height:20px;color:#000;left:544.00px;width:600px;text-align:center;transform-origin:50% 0;transform:scaleX(0.9998);">25 days</span>
<span id="t67" class="t" style="top:298.67px;font-size:20px;line-height:20px;color:#000;left:684.50px;width:600px;text-align:center;transform-origin:50% 0;transform:scaleX(1.0000);">09 Jan '23</span>
<span id="t68" class="t" style="top:298.67px;font-size:20px;line-height:20px;color:#000;left:841.50px;width:600px;text-align:center;transform-origin:50% 0;transform:scaleX(1.0000);">02 Feb '23</span>
<span id="t69" class="t" style="top:326.67px;font-size:20px;line-height:20px;color:#595959;left:18.50px;transform:scaleX(0.9998);">4</span>
<span id="t70" class="t" style="top:326.67px;font-size:20px;line-height:20px;color:#000;left:93.62px;transform:scaleX(0.9860);">Prepare &amp; Issue Key HSE Documents</span>
<span id="t71" class="t" style="top:326.67px;font-size:20px;line-height:20px;color:#000;left:414.50px;width:600px;text-align:center;transform-origin:50% 0;transform:scaleX(1.0000);">84%</span>
<span id="t72" class="t" style="top:326.67px;font-size:20px;line-height:20px;color:#000;left:544.00px;width:600px;text-align:center;transform-origin:50% 0;transform:scaleX(0.9998);">25 days</span>
<span id="t73" class="t" style="top:326.67px;font-size:20px;line-height:20px;color:#000;left:684.50px;width:600px;text-align:center;transform-origin:50% 0;transform:scaleX(1.0000);">09 Jan '23</span>
<span id="t74" class="t" style="top:326.67px;font-size:20px;line-height:20px;color:#000;left:841.50px;width:600px;text-align:center;transform-origin:50% 0;transform:scaleX(1.0000);">02 Feb '23</span>
<span id="t75" class="t" style="top:354.67px;font-size:20px;line-height:20px;color:#595959;left:18.50px;transform:scaleX(0.9998);">5</span>
<span id="t76" class="t" style="top:354.67px;font-size:20px;line-height:20px;color:#000;left:93.61px;transform:scaleX(0.9917);">Prepare &amp; Issue Key Project Controls Documents</span>
<span id="t77" class="t" style="top:354.67px;font-size:20px;line-height:20px;color:#000;left:414.50px;width:600px;text-align:center;transform-origin:50% 0;transform:scaleX(1.0000);">84%</span>
<span id="t78" class="t" style="top:354.67px;font-size:20px;line-height:20px;color:#000;left:544.00px;width:600px;text-align:center;transform-origin:50% 0;transform:scaleX(0.9998);">25 days</span>
<span id="t79" class="t" style="top:354.67px;font-size:20px;line-height:20px;color:#000;left:684.50px;width:600px;text-align:center;transform-origin:50% 0;transform:scaleX(1.0000);">09 Jan '23</span>
<span id="t80" class="t" style="top:354.67px;font-size:20px;line-height:20px;color:#000;left:841.50px;width:600px;text-align:center;transform-origin:50% 0;transform:scaleX(1.0000);">02 Feb '23</span>
<span id="t81" class="t" style="top:382.67px;font-size:20px;line-height:20px;color:#595959;left:18.50px;transform:scaleX(0.9998);">7</span>
<span id="t82" class="t" style="top:382.67px;font-size:20px;line-height:20px;color:#000;font-weight:700;left:77.01px;transform:scaleX(0.9912);">Engineering</span>
<span id="t83" class="t" style="top:382.67px;font-size:20px;line-height:20px;color:#000;font-weight:700;left:414.50px;width:600px;text-align:center;transform-origin:50% 0;transform:scaleX(1.0000);">0%</span>
<span id="t84" class="t" style="top:382.67px;font-size:20px;line-height:20px;color:#000;font-weight:700;left:544.00px;width:600px;text-align:center;transform-origin:50% 0;transform:scaleX(1.0000);">291 days</span>
<span id="t85" class="t" style="top:382.67px;font-size:20px;line-height:20px;color:#000;font-weight:700;left:684.50px;width:600px;text-align:center;transform-origin:50% 0;transform:scaleX(1.0000);">03 Feb '23</span>
<span id="t86" class="t" style="top:382.67px;font-size:20px;line-height:20px;color:#000;font-weight:700;left:841.50px;width:600px;text-align:center;transform-origin:50% 0;transform:scaleX(0.9999);">20 Nov '23</span>
<span id="t87" class="t" style="top:410.67px;font-size:20px;line-height:20px;color:#595959;left:18.50px;transform:scaleX(0.9998);">8</span>
<span id="t88" class="t" style="top:410.67px;font-size:20px;line-height:20px;color:#000;font-weight:700;left:93.63px;transform:scaleX(0.9734);">Dummy Summary</span>
<span id="t89" class="t" style="top:410.67px;font-size:20px;line-height:20px;color:#000;font-weight:700;left:414.50px;width:600px;text-align:center;transform-origin:50% 0;transform:scaleX(1.0000);">0%</span>
<span id="t90" class="t" style="top:410.67px;font-size:20px;line-height:20px;color:#000;font-weight:700;left:544.00px;width:600px;text-align:center;transform-origin:50% 0;transform:scaleX(1.0000);">65 days</span>
<span id="t91" class="t" style="top:410.67px;font-size:20px;line-height:20px;color:#000;font-weight:700;left:684.50px;width:600px;text-align:center;transform-origin:50% 0;transform:scaleX(1.0000);">03 Feb '23</span>
<span id="t92" class="t" style="top:410.67px;font-size:20px;line-height:20px;color:#000;font-weight:700;left:841.50px;width:600px;text-align:center;transform-origin:50% 0;transform:scaleX(1.0000);">08 Apr '23</span>
<span id="t93" class="t" style="top:438.67px;font-size:20px;line-height:20px;color:#595959;left:18.50px;transform:scaleX(0.9998);">9</span>
<span id="t94" class="t" style="top:438.67px;font-size:20px;line-height:20px;color:#000;left:109.63px;transform:scaleX(0.9759);">Dummy Milestone</span>
<span id="t95" class="t" style="top:438.67px;font-size:20px;line-height:20px;color:#000;left:414.50px;width:600px;text-align:center;transform-origin:50% 0;transform:scaleX(1.0000);">0%</span>
<span id="t96" class="t" style="top:438.67px;font-size:20px;line-height:20px;color:#000;left:544.00px;width:600px;text-align:center;transform-origin:50% 0;transform:scaleX(0.9998);">0 days</span>
<span id="t97" class="t" style="top:438.67px;font-size:20px;line-height:20px;color:#000;left:684.50px;width:600px;text-align:center;transform-origin:50% 0;transform:scaleX(0.9999);">09 Mar '23</span>
<span id="t98" class="t" style="top:438.67px;font-size:20px;line-height:20px;color:#000;left:841.50px;width:600px;text-align:center;transform-origin:50% 0;transform:scaleX(0.9999);">09 Mar '23</span>
<span id="t99" class="t" style="top:466.67px;font-size:20px;line-height:20px;color:#595959;left:18.50px;transform:scaleX(0.9998);">10</span>
<span id="t100" class="t" style="top:466.67px;font-size:20px;line-height:20px;color:#000;left:109.65px;transform:scaleX(0.9611);">Dummy 01</span>
<span id="t101" class="t" style="top:466.67px;font-size:20px;line-height:20px;color:#000;left:414.50px;width:600px;text-align:center;transform-origin:50% 0;transform:scaleX(1.0000);">0%</span>
<span id="t102" class="t" style="top:466.67px;font-size:20px;line-height:20px;color:#000;left:544.00px;width:600px;text-align:center;transform-origin:50% 0;transform:scaleX(0.9998);">45 days</span>
<span id="t103" class="t" style="top:466.67px;font-size:20px;line-height:20px;color:#000;left:684.50px;width:600px;text-align:center;transform-origin:50% 0;transform:scaleX(1.0000);">03 Feb '23</span>
<span id="t104" class="t" style="top:466.67px;font-size:20px;line-height:20px;color:#000;left:841.50px;width:600px;text-align:center;transform-origin:50% 0;transform:scaleX(0.9999);">19 Mar '23</span>
<span id="t105" class="t" style="top:494.67px;font-size:20px;line-height:20px;color:#595959;left:18.50px;transform:scaleX(0.9998);">11</span>
<span id="t106" class="t" style="top:494.67px;font-size:20px;line-height:20px;color:#000;left:109.63px;transform:scaleX(0.9737);">Dummy 02</span>
<span id="t107" class="t" style="top:494.67px;font-size:20px;line-height:20px;color:#000;left:414.50px;width:600px;text-align:center;transform-origin:50% 0;transform:scaleX(1.0000);">0%</span>
<span id="t108" class="t" style="top:494.67px;font-size:20px;line-height:20px;color:#000;left:544.00px;width:600px;text-align:center;transform-origin:50% 0;transform:scaleX(0.9998);">30 days</span>
<span id="t109" class="t" style="top:494.67px;font-size:20px;line-height:20px;color:#000;left:684.50px;width:600px;text-align:center;transform-origin:50% 0;transform:scaleX(1.0000);">08 Feb '23</span>
<span id="t110" class="t" style="top:494.67px;font-size:20px;line-height:20px;color:#000;left:841.50px;width:600px;text-align:center;transform-origin:50% 0;transform:scaleX(0.9999);">09 Mar '23</span>
<span id="t111" class="t" style="top:522.67px;font-size:20px;line-height:20px;color:#595959;left:18.50px;transform:scaleX(0.9998);">12</span>
<span id="t112" class="t" style="top:522.67px;font-size:20px;line-height:20px;color:#000;left:109.63px;transform:scaleX(0.9737);">Dummy 03</span>
<span id="t113" class="t" style="top:522.67px;font-size:20px;line-height:20px;color:#000;left:414.50px;width:600px;text-align:center;transform-origin:50% 0;transform:scaleX(1.0000);">0%</span>
<span id="t114" class="t" style="top:522.67px;font-size:20px;line-height:20px;color:#000;left:544.00px;width:600px;text-align:center;transform-origin:50% 0;transform:scaleX(0.9998);">30 days</span>
<span id="t115" class="t" style="top:522.67px;font-size:20px;line-height:20px;color:#000;left:684.50px;width:600px;text-align:center;transform-origin:50% 0;transform:scaleX(0.9999);">10 Mar '23</span>
<span id="t116" class="t" style="top:522.67px;font-size:20px;line-height:20px;color:#000;left:841.50px;width:600px;text-align:center;transform-origin:50% 0;transform:scaleX(0.9999);">08 Apr '23</span>
<span id="t117" class="t" style="top:550.67px;font-size:20px;line-height:20px;color:#595959;left:18.50px;transform:scaleX(0.9998);">13</span>
<span id="t118" class="t" style="top:550.67px;font-size:20px;line-height:20px;color:#000;font-weight:700;left:93.63px;transform:scaleX(0.9728);">Pipeline Design</span>
<span id="t119" class="t" style="top:550.67px;font-size:20px;line-height:20px;color:#000;font-weight:700;left:414.50px;width:600px;text-align:center;transform-origin:50% 0;transform:scaleX(1.0000);">0%</span>
<span id="t120" class="t" style="top:550.67px;font-size:20px;line-height:20px;color:#000;font-weight:700;left:544.00px;width:600px;text-align:center;transform-origin:50% 0;transform:scaleX(1.0000);">70 days</span>
<span id="t121" class="t" style="top:550.67px;font-size:20px;line-height:20px;color:#000;font-weight:700;left:684.50px;width:600px;text-align:center;transform-origin:50% 0;transform:scaleX(1.0000);">03 Feb '23</span>
<span id="t122" class="t" style="top:550.67px;font-size:20px;line-height:20px;color:#000;font-weight:700;left:841.50px;width:600px;text-align:center;transform-origin:50% 0;transform:scaleX(1.0000);">13 Apr '23</span>
<span id="t123" class="t" style="top:578.67px;font-size:20px;line-height:20px;color:#595959;left:18.50px;transform:scaleX(0.9998);">14</span>
<span id="t124" class="t" style="top:578.67px;font-size:20px;line-height:20px;color:#000;left:109.62px;transform:scaleX(0.9838);">Prepare &amp; Issue Pipeline Design Premise</span>
<span id="t125" class="t" style="top:578.67px;font-size:20px;line-height:20px;color:#000;left:414.50px;width:600px;text-align:center;transform-origin:50% 0;transform:scaleX(1.0000);">0%</span>
<span id="t126" class="t" style="top:578.67px;font-size:20px;line-height:20px;color:#000;left:544.00px;width:600px;text-align:center;transform-origin:50% 0;transform:scaleX(0.9998);">20 days</span>
<span id="t127" class="t" style="top:578.67px;font-size:20px;line-height:20px;color:#000;left:684.50px;width:600px;text-align:center;transform-origin:50% 0;transform:scaleX(1.0000);">03 Feb '23</span>
<span id="t128" class="t" style="top:578.67px;font-size:20px;line-height:20px;color:#000;left:841.50px;width:600px;text-align:center;transform-origin:50% 0;transform:scaleX(1.0000);">22 Feb '23</span>
<span id="t129" class="t" style="top:606.67px;font-size:20px;line-height:20px;color:#595959;left:18.50px;transform:scaleX(0.9998);">15</span>
<span id="t130" class="t" style="top:606.67px;font-size:20px;line-height:20px;color:#000;left:109.62px;transform:scaleX(0.9854);">Prepare &amp; Issue Pipeline Corrosion Design Report</span>
<span id="t131" class="t" style="top:606.67px;font-size:20px;line-height:20px;color:#000;left:414.50px;width:600px;text-align:center;transform-origin:50% 0;transform:scaleX(1.0000);">0%</span>
<span id="t132" class="t" style="top:606.67px;font-size:20px;line-height:20px;color:#000;left:544.00px;width:600px;text-align:center;transform-origin:50% 0;transform:scaleX(0.9998);">50 days</span>
<span id="t133" class="t" style="top:606.67px;font-size:20px;line-height:20px;color:#000;left:684.50px;width:600px;text-align:center;transform-origin:50% 0;transform:scaleX(1.0000);">23 Feb '23</span>
<span id="t134" class="t" style="top:606.67px;font-size:20px;line-height:20px;color:#000;left:841.50px;width:600px;text-align:center;transform-origin:50% 0;transform:scaleX(0.9999);">13 Apr '23</span>
<span id="t135" class="t" style="top:634.67px;font-size:20px;line-height:20px;color:#595959;left:18.50px;transform:scaleX(0.9998);">16</span>
<span id="t136" class="t" style="top:634.67px;font-size:20px;line-height:20px;color:#000;left:109.63px;transform:scaleX(0.9772);">Prepare &amp; Issue Pipeline Pipeline Expansion Report</span>
<span id="t137" class="t" style="top:634.67px;font-size:20px;line-height:20px;color:#000;left:414.50px;width:600px;text-align:center;transform-origin:50% 0;transform:scaleX(1.0000);">0%</span>
<span id="t138" class="t" style="top:634.67px;font-size:20px;line-height:20px;color:#000;left:544.00px;width:600px;text-align:center;transform-origin:50% 0;transform:scaleX(0.9998);">50 days</span>
<span id="t139" class="t" style="top:634.67px;font-size:20px;line-height:20px;color:#000;left:684.50px;width:600px;text-align:center;transform-origin:50% 0;transform:scaleX(1.0000);">23 Feb '23</span>
<span id="t140" class="t" style="top:634.67px;font-size:20px;line-height:20px;color:#000;left:841.50px;width:600px;text-align:center;transform-origin:50% 0;transform:scaleX(0.9999);">13 Apr '23</span>
<span id="t141" class="t" style="top:662.67px;font-size:20px;line-height:20px;color:#595959;left:18.50px;transform:scaleX(0.9998);">17</span>
<span id="t142" class="t" style="top:662.67px;font-size:20px;line-height:20px;color:#000;left:109.62px;transform:scaleX(0.9870);">Prepare &amp; Issue Pipeline Wall Thickness Report</span>
<span id="t143" class="t" style="top:662.67px;font-size:20px;line-height:20px;color:#000;left:414.50px;width:600px;text-align:center;transform-origin:50% 0;transform:scaleX(1.0000);">0%</span>
<span id="t144" class="t" style="top:662.67px;font-size:20px;line-height:20px;color:#000;left:544.00px;width:600px;text-align:center;transform-origin:50% 0;transform:scaleX(0.9998);">50 days</span>
<span id="t145" class="t" style="top:662.67px;font-size:20px;line-height:20px;color:#000;left:684.50px;width:600px;text-align:center;transform-origin:50% 0;transform:scaleX(1.0000);">23 Feb '23</span>
<span id="t146" class="t" style="top:662.67px;font-size:20px;line-height:20px;color:#000;left:841.50px;width:600px;text-align:center;transform-origin:50% 0;transform:scaleX(0.9999);">13 Apr '23</span>
<span id="t147" class="t" style="top:690.67px;font-size:20px;line-height:20px;color:#595959;left:18.50px;transform:scaleX(0.9998);">18</span>
<span id="t148" class="t" style="top:690.67px;font-size:20px;line-height:20px;color:#000;left:109.64px;transform:scaleX(0.9674);">Engineering Design Completion</span>
<span id="t149" class="t" style="top:690.67px;font-size:20px;line-height:20px;color:#000;left:414.50px;width:600px;text-align:center;transform-origin:50% 0;transform:scaleX(1.0000);">0%</span>
<span id="t150" class="t" style="top:690.67px;font-size:20px;line-height:20px;color:#000;left:544.00px;width:600px;text-align:center;transform-origin:50% 0;transform:scaleX(0.9998);">0 days</span>
<span id="t151" class="t" style="top:690.67px;font-size:20px;line-height:20px;color:#000;left:684.50px;width:600px;text-align:center;transform-origin:50% 0;transform:scaleX(0.9999);">13 Apr '23</span>
<span id="t152" class="t" style="top:690.67px;font-size:20px;line-height:20px;color:#000;left:841.50px;width:600px;text-align:center;transform-origin:50% 0;transform:scaleX(0.9999);">13 Apr '23</span>
<span id="t153" class="t" style="top:718.67px;font-size:20px;line-height:20px;color:#595959;left:18.50px;transform:scaleX(0.9998);">19</span>
<span id="t154" class="t" style="top:718.67px;font-size:20px;line-height:20px;color:#000;font-weight:700;left:94.60px;transform:scaleX(0.9859);">Construction &amp; Installation Procedures</span>
<span id="t155" class="t" style="top:718.67px;font-size:20px;line-height:20px;color:#000;font-weight:700;left:414.50px;width:600px;text-align:center;transform-origin:50% 0;transform:scaleX(1.0000);">0%</span>
<span id="t156" class="t" style="top:718.67px;font-size:20px;line-height:20px;color:#000;font-weight:700;left:544.00px;width:600px;text-align:center;transform-origin:50% 0;transform:scaleX(1.0000);">221 days</span>
<span id="t157" class="t" style="top:718.67px;font-size:20px;line-height:20px;color:#000;font-weight:700;left:684.50px;width:600px;text-align:center;transform-origin:50% 0;transform:scaleX(1.0000);">14 Apr '23</span>
<span id="t158" class="t" style="top:718.67px;font-size:20px;line-height:20px;color:#000;font-weight:700;left:841.50px;width:600px;text-align:center;transform-origin:50% 0;transform:scaleX(0.9999);">20 Nov '23</span>
<span id="t159" class="t" style="top:746.67px;font-size:20px;line-height:20px;color:#595959;left:18.50px;transform:scaleX(0.9998);">20</span>
<span id="t160" class="t" style="top:746.67px;font-size:20px;line-height:20px;color:#000;left:109.62px;transform:scaleX(0.9832);">Prepare &amp; Issue Pipeline Installation Analysis</span>
<span id="t161" class="t" style="top:746.67px;font-size:20px;line-height:20px;color:#000;left:414.50px;width:600px;text-align:center;transform-origin:50% 0;transform:scaleX(1.0000);">0%</span>
<span id="t162" class="t" style="top:746.67px;font-size:20px;line-height:20px;color:#000;left:544.00px;width:600px;text-align:center;transform-origin:50% 0;transform:scaleX(0.9998);">80 days</span>
<span id="t163" class="t" style="top:746.67px;font-size:20px;line-height:20px;color:#000;left:684.50px;width:600px;text-align:center;transform-origin:50% 0;transform:scaleX(0.9999);">14 Apr '23</span>
<span id="t164" class="t" style="top:746.67px;font-size:20px;line-height:20px;color:#000;left:841.50px;width:600px;text-align:center;transform-origin:50% 0;transform:scaleX(0.9999);">02 Jul '23</span>
<span id="t165" class="t" style="top:774.67px;font-size:20px;line-height:20px;color:#595959;left:18.50px;transform:scaleX(0.9998);">23</span>
<span id="t166" class="t" style="top:774.67px;font-size:20px;line-height:20px;color:#000;font-weight:700;left:77.01px;transform:scaleX(0.9950);">Procurement &amp; Onshore Construction</span>
<span id="t167" class="t" style="top:774.67px;font-size:20px;line-height:20px;color:#000;font-weight:700;left:414.50px;width:600px;text-align:center;transform-origin:50% 0;transform:scaleX(1.0000);">0%</span>
<span id="t168" class="t" style="top:774.67px;font-size:20px;line-height:20px;color:#000;font-weight:700;left:544.00px;width:600px;text-align:center;transform-origin:50% 0;transform:scaleX(1.0000);">170 days</span>
<span id="t169" class="t" style="top:774.67px;font-size:20px;line-height:20px;color:#000;font-weight:700;left:684.50px;width:600px;text-align:center;transform-origin:50% 0;transform:scaleX(1.0000);">14 Apr '23</span>
<span id="t170" class="t" style="top:774.67px;font-size:20px;line-height:20px;color:#000;font-weight:700;left:841.50px;width:600px;text-align:center;transform-origin:50% 0;transform:scaleX(0.9999);">30 Sep '23</span>
<span id="t171" class="t" style="top:802.67px;font-size:20px;line-height:20px;color:#595959;left:18.50px;transform:scaleX(0.9998);">24</span>
<span id="t172" class="t" style="top:802.67px;font-size:20px;line-height:20px;color:#000;left:93.61px;transform:scaleX(0.9900);">Negotiate &amp; Award Linepipes Procurement &amp; Coating</span>
<span id="t173" class="t" style="top:802.67px;font-size:20px;line-height:20px;color:#000;left:414.50px;width:600px;text-align:center;transform-origin:50% 0;transform:scaleX(1.0000);">0%</span>
<span id="t174" class="t" style="top:802.67px;font-size:20px;line-height:20px;color:#000;left:544.00px;width:600px;text-align:center;transform-origin:50% 0;transform:scaleX(0.9998);">20 days</span>
<span id="t175" class="t" style="top:802.67px;font-size:20px;line-height:20px;color:#000;left:684.50px;width:600px;text-align:center;transform-origin:50% 0;transform:scaleX(0.9999);">14 Apr '23</span>
<span id="t176" class="t" style="top:802.67px;font-size:20px;line-height:20px;color:#000;left:841.50px;width:600px;text-align:center;transform-origin:50% 0;transform:scaleX(0.9999);">03 May '23</span>
<span id="t177" class="t" style="top:825.07px;font-size:20px;line-height:20px;color:#000;left:93.63px;transform:scaleX(0.9755);">Subcontract</span>
<span id="t178" class="t" style="top:242.67px;font-size:20px;line-height:20px;color:#2e7532;font-weight:700;left:68.20px;transform:scaleX(0.9999);">Task Name</span>
<span id="t179" class="t" style="top:242.57px;font-size:20px;line-height:20px;color:#5e5e5e;left:652.70px;transform:scaleX(1.0000);">% Complete</span>
<span id="t180" class="t" style="top:242.57px;font-size:20px;line-height:20px;color:#5e5e5e;left:799.30px;transform:scaleX(0.9998);">Duration</span>
<span id="t181" class="t" style="top:242.57px;font-size:20px;line-height:20px;color:#5e5e5e;left:954.70px;transform:scaleX(0.9997);">Start</span>
<span id="t182" class="t" style="top:242.57px;font-size:20px;line-height:20px;color:#5e5e5e;left:1108.30px;transform:scaleX(0.9998);">Finish</span>
<span id="t183" class="t" style="top:212.77px;font-size:20px;line-height:20px;color:#505050;left:1724.50px;transform:scaleX(0.9998);">2023</span>
<span id="t184" class="t" style="top:239.47px;font-size:20px;line-height:20px;color:#505050;left:963.66px;width:600px;text-align:center;transform-origin:50% 0;transform:scaleX(0.9999);">Jan</span>
<span id="t185" class="t" style="top:239.47px;font-size:20px;line-height:20px;color:#505050;left:1048.99px;width:600px;text-align:center;transform-origin:50% 0;transform:scaleX(0.9998);">Feb</span>
<span id="t186" class="t" style="top:239.47px;font-size:20px;line-height:20px;color:#505050;left:1134.32px;width:600px;text-align:center;transform-origin:50% 0;transform:scaleX(0.9997);">Mar</span>
<span id="t187" class="t" style="top:239.47px;font-size:20px;line-height:20px;color:#505050;left:1222.54px;width:600px;text-align:center;transform-origin:50% 0;transform:scaleX(0.9999);">Apr</span>
<span id="t188" class="t" style="top:239.47px;font-size:20px;line-height:20px;color:#505050;left:1310.76px;width:600px;text-align:center;transform-origin:50% 0;transform:scaleX(0.9996);">May</span>
<span id="t189" class="t" style="top:239.47px;font-size:20px;line-height:20px;color:#505050;left:1398.98px;width:600px;text-align:center;transform-origin:50% 0;transform:scaleX(0.9999);">Jun</span>
<span id="t190" class="t" style="top:239.47px;font-size:20px;line-height:20px;color:#505050;left:1487.21px;width:600px;text-align:center;transform-origin:50% 0;transform:scaleX(0.9995);">Jul</span>
<span id="t191" class="t" style="top:436.97px;font-size:20px;line-height:20px;color:#000;font-weight:700;left:1351.01px;transform:scaleX(0.9900);">09-03</span>
<span id="t192" class="t" style="top:689.17px;font-size:20px;line-height:20px;color:#000;font-weight:700;left:1452.01px;transform:scaleX(0.9900);">13-04</span>
</body></html>
